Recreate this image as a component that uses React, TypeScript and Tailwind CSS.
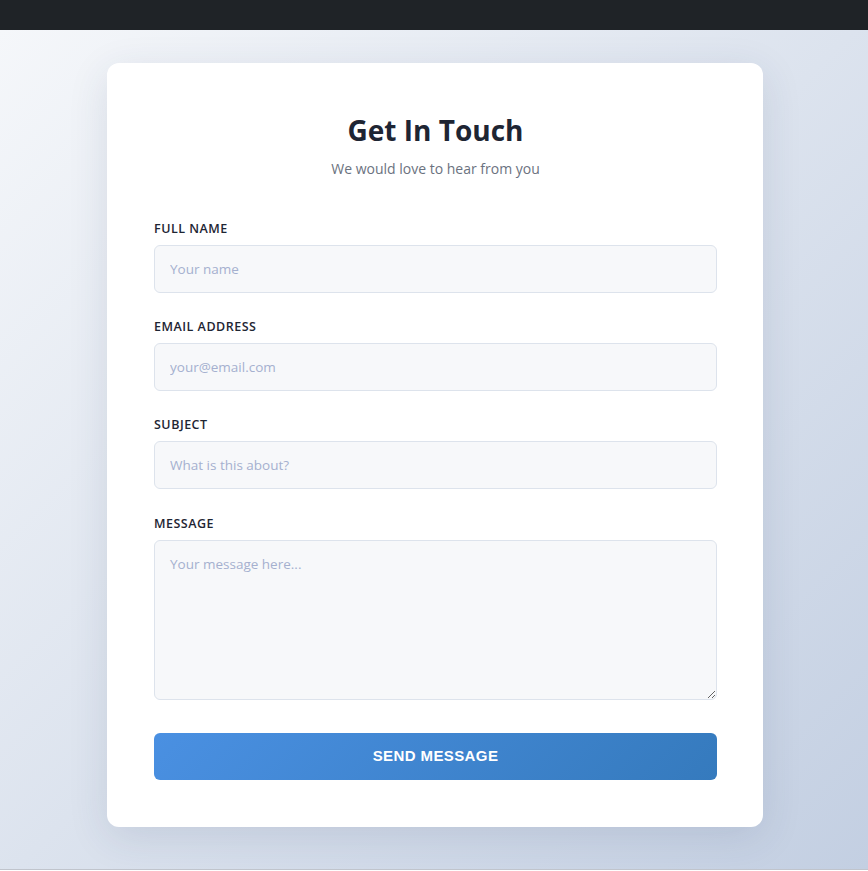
import React from "react";

const fields = [
  { label: "Full Name", placeholder: "Your name", type: "text" },
  { label: "Email Address", placeholder: "your@email.com", type: "email" },
  { label: "Subject", placeholder: "What is this about?", type: "text" },
];

const inputClass =
  "w-full rounded-md border border-[#dde3ec] bg-[#f7f8fa] px-[15px] text-[13.5px] text-[#2d3748] outline-none placeholder:text-[#a5b0cf]";

const labelClass =
  "mb-[7px] text-[12.5px] font-semibold uppercase leading-[18px] tracking-[0.5px] text-[#1e2533]";

const App = () => {
  return (
    <div className="flex min-h-[871px] flex-col bg-white font-['Open_Sans',sans-serif]">
      <div className="h-[30px] bg-[#1f2327]" />
      <main className="flex h-[839px] justify-center bg-[linear-gradient(135deg,#f5f7fa,#c3cfe2)] pl-[2px] pt-[33px]">
        <div className="h-[764px] w-[656px] rounded-xl bg-white pl-[47px] pr-[46px] pt-[45px] shadow-[0_10px_40px_rgba(40,60,100,0.12)]">
          <h1 className="text-center text-[28px] font-bold leading-[44px] text-[#1e2533]">
            Get In Touch
          </h1>
          <p className="mt-[6px] text-center text-[14px] leading-[22px] text-[#6b7280]">
            We would love to hear from you
          </p>

          <form className="mt-[40px] flex flex-col">
            {fields.map((f) => (
              <div key={f.label} className="mb-[25px] flex flex-col">
                <label className={labelClass}>{f.label}</label>
                <input type={f.type} placeholder={f.placeholder} className={`${inputClass} h-[48px]`} />
              </div>
            ))}
            <div className="mb-[33px] mt-px flex flex-col">
              <label className={labelClass}>Message</label>
              <textarea
                placeholder="Your message here..."
                className={`${inputClass} h-[160px] resize-y py-[12px] leading-[22px]`}
              />
            </div>
            <button
              type="button"
              className="h-[47px] w-full rounded-md bg-[linear-gradient(135deg,#4a90e2,#357abd)] font-['Liberation_Sans',sans-serif] text-[15px] font-bold uppercase tracking-[0.4px] text-white"
            >
              Send Message
            </button>
          </form>
        </div>
      </main>
      <div className="h-px bg-[#c0c4cc]" />
    </div>
  );
};

export default App;
